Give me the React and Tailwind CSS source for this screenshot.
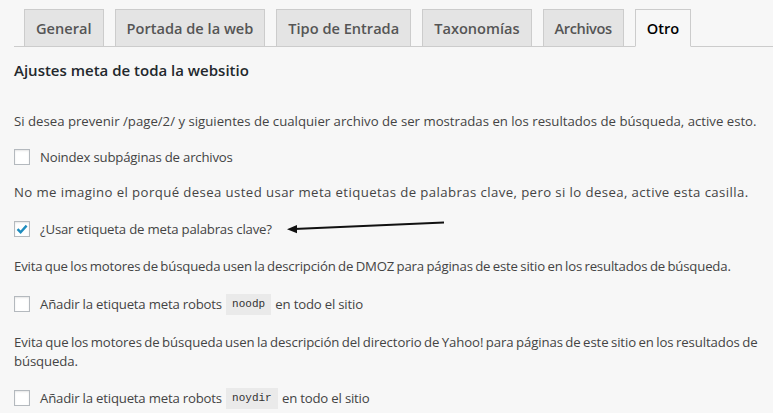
import React from 'react';

const tabs = ['General', 'Portada de la web', 'Tipo de Entrada', 'Taxonomías', 'Archivos', 'Otro'];

const Tab = ({ label, active }) => (
  <div
    className={
      'border border-[#cccccc] -mb-px px-[11px] h-[38px] flex items-center text-[14.6px] font-semibold ' +
      (active ? 'bg-[#f7f7f7] border-b-[#f7f7f7] text-black' : 'bg-[#e4e4e4] text-[#555555]') +
      (label === 'Archivos' ? ' tracking-[-0.4px]' : '')
    }
  >
    {label}
  </div>
);

const Checkbox = ({ checked }) => (
  <span className="w-4 h-4 border border-[#b4b9be] bg-white shadow-[inset_0_1px_2px_rgba(0,0,0,0.1)] flex items-center justify-center shrink-0">
    {checked && (
      <svg width="14" height="14" viewBox="0 0 14 14">
        <path d="M2.5 7.2 L5.6 10.2 L11.6 3.6" fill="none" stroke="#1e8cbe" strokeWidth="2.4" />
      </svg>
    )}
  </span>
);

const Code = ({ children }) => (
  <code className="bg-[#eaeaea] px-[6px] h-[21px] inline-flex items-center mx-[1px] text-[11px] tracking-normal text-[#333]" style={{ fontFamily: '"Liberation Mono", "DejaVu Sans Mono", monospace' }}>
    {children}
  </code>
);

const Row = ({ checked, children, className = '' }) => (
  <div className={'relative flex items-center gap-[10px] h-5 ' + className}>
    <Checkbox checked={checked} />
    <span className="flex items-center whitespace-pre tracking-[-0.2px]">{children}</span>
  </div>
);

export default function App() {
  return (
    <div className="min-h-screen bg-[#f7f7f7] text-[#444444] text-[13.2px] leading-[20px] overflow-hidden" style={{ fontFamily: '"Open Sans", sans-serif' }}>
      <div className="pt-[9px] pl-[14px]">
        <div className="flex gap-[11px] pl-[10px] border-b border-[#cccccc]">
          {tabs.map((t) => (
            <Tab key={t} label={t} active={t === 'Otro'} />
          ))}
        </div>
      </div>

      <div className="px-[14px]">
        <h2 className="mt-[13px] text-[15px] font-semibold text-[#23282d] leading-[20px]">Ajustes meta de toda la websitio</h2>

        <p className="mt-[31px] whitespace-nowrap">
          Si desea prevenir /page/2/ y siguientes de cualquier archivo de ser mostradas en los resultados de búsqueda, active esto.
        </p>
        <Row className="mt-[16px]">Noindex subpáginas de archivos</Row>

        <p className="mt-[15px] whitespace-nowrap tracking-[0.4px]">
          No me imagino el porqué desea usted usar meta etiquetas de palabras clave, pero si lo desea, active esta casilla.
        </p>
        <Row checked className="mt-[17px]">
          ¿Usar etiqueta de meta palabras clave?
          <svg className="absolute left-[270px] top-[-2px]" width="180" height="24" viewBox="0 0 180 24">
            <line x1="10" y1="12" x2="160" y2="5.5" stroke="#111" strokeWidth="2" />
            <path d="M3 12.3 L13 8 L13 16.3 Z" fill="#111" />
          </svg>
        </Row>

        <p className="mt-[17px] whitespace-nowrap tracking-[-0.18px] [word-spacing:-0.8px]">
          Evita que los motores de búsqueda usen la descripción de DMOZ para páginas de este sitio en los resultados de búsqueda.
        </p>
        <Row className="mt-[18px]">
          Añadir la etiqueta meta robots <Code>noodp</Code> en todo el sitio
        </Row>

        <p className="mt-[19px] leading-[19px] whitespace-nowrap tracking-[-0.11px] [word-spacing:-0.8px]">
          Evita que los motores de búsqueda usen la descripción del directorio de Yahoo! para páginas de este sitio en los resultados de
          <br />
          búsqueda.
        </p>
        <Row className="mt-[17px]">
          Añadir la etiqueta meta robots <Code>noydir</Code> en todo el sitio
        </Row>
      </div>
    </div>
  );
}
